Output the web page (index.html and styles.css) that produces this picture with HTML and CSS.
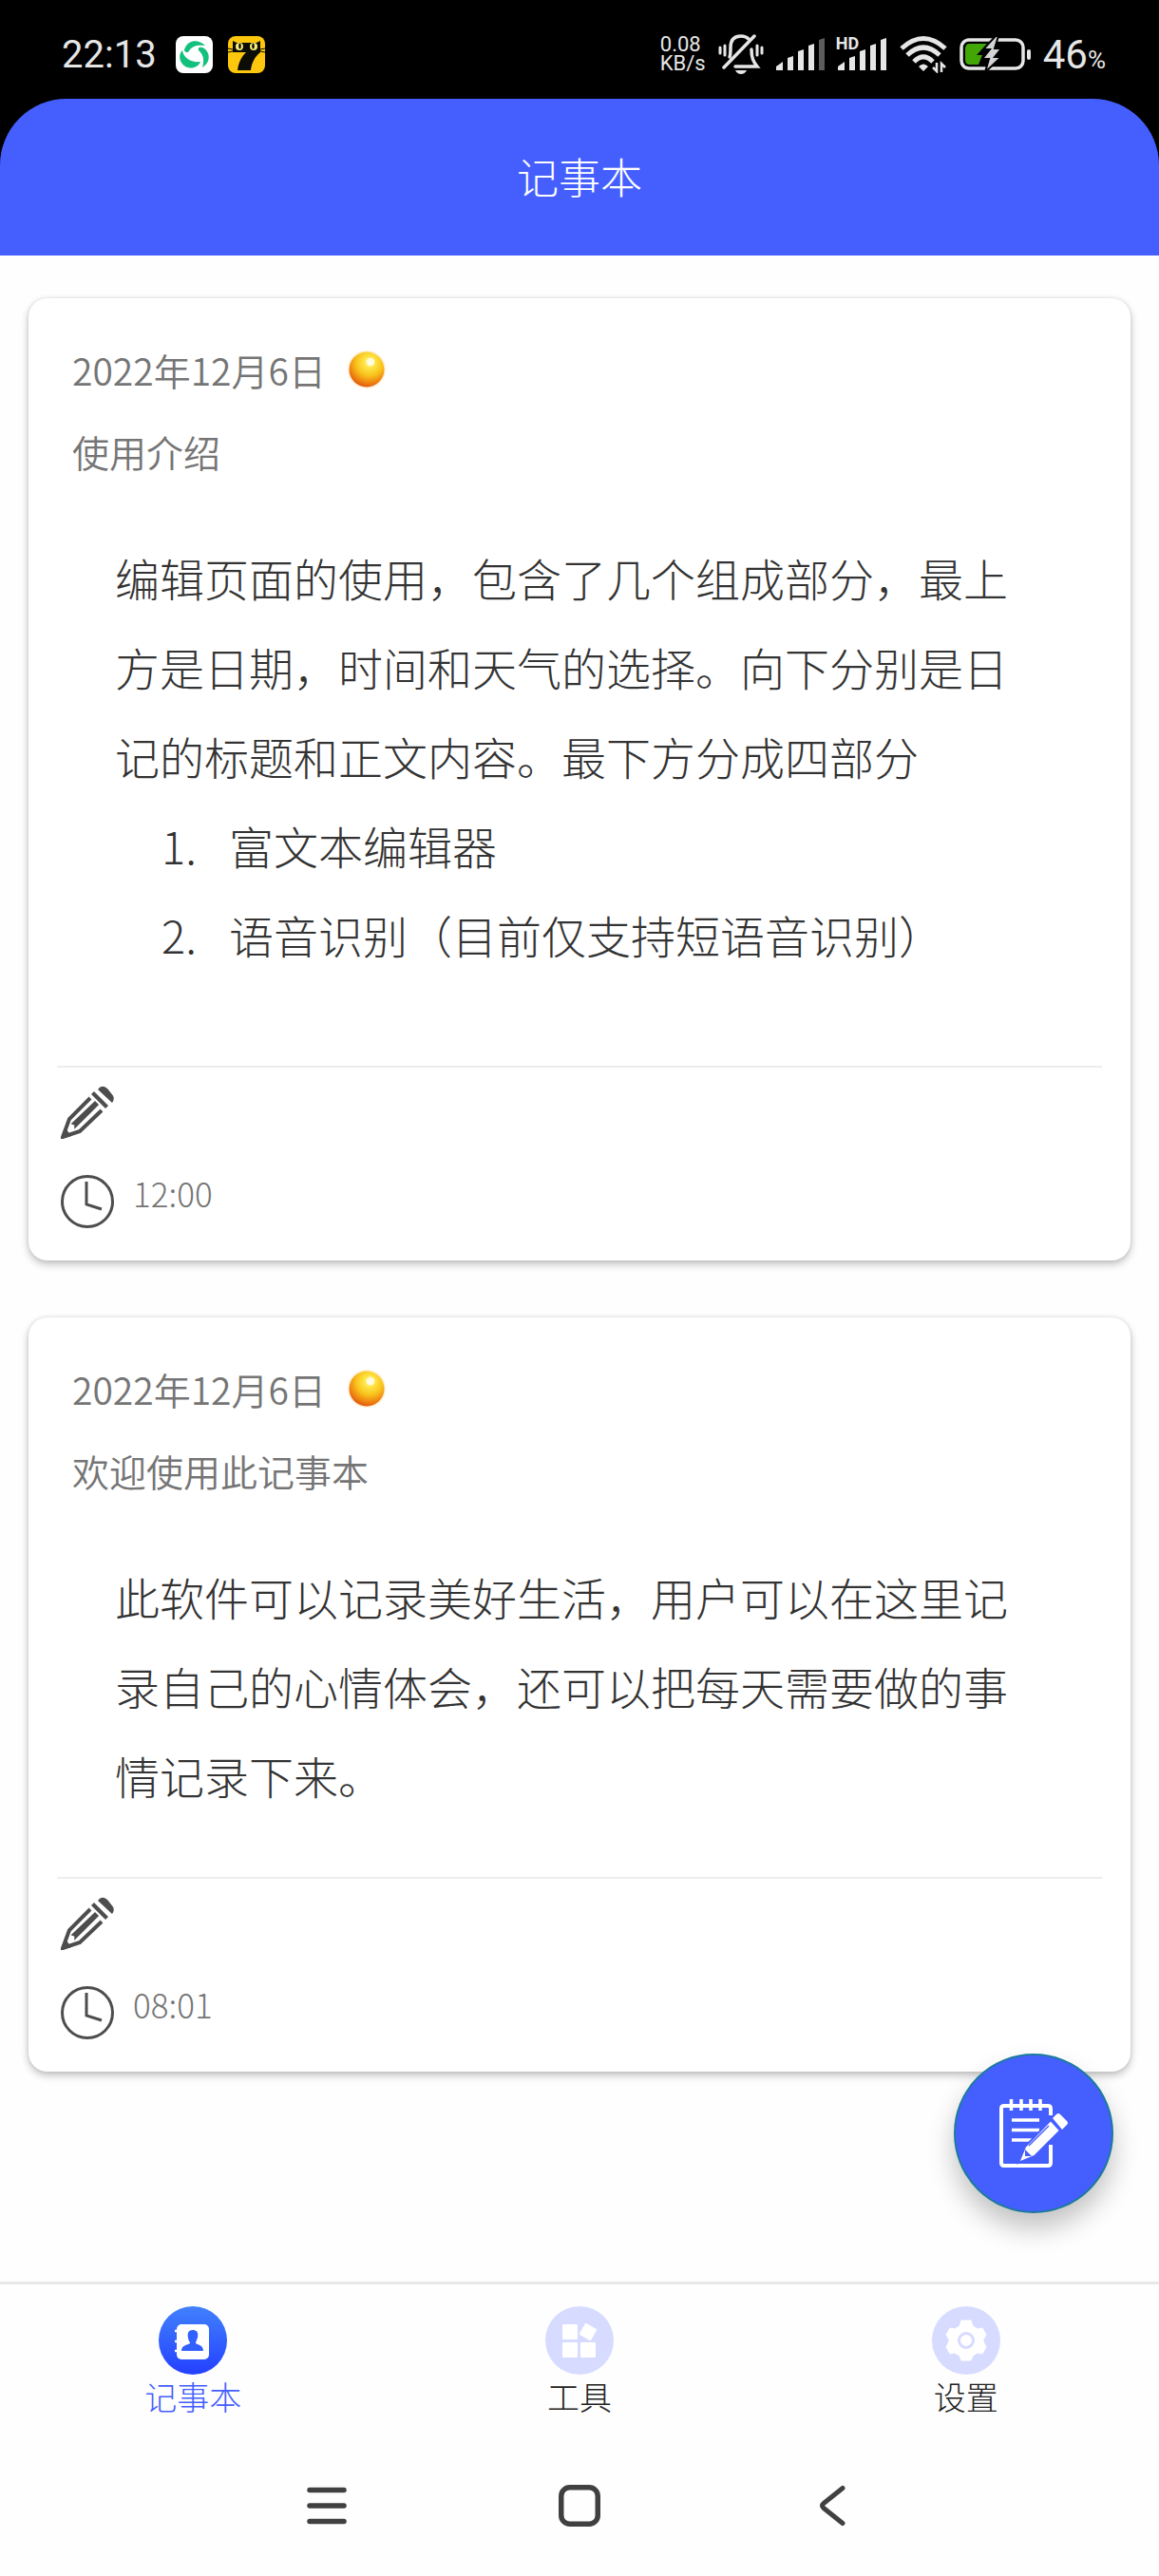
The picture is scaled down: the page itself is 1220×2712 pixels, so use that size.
FILE: index.html
```html
<!DOCTYPE html>
<html lang="zh-CN">
<head>
<meta charset="utf-8">
<meta name="viewport" content="width=device-width, initial-scale=1">
<title>记事本</title>
<link rel="stylesheet" href="styles.css">
</head>
<body>
<svg class="sprite" aria-hidden="true">
  <defs>
    <radialGradient id="orb-fill" cx="58%" cy="30%" r="75%">
      <stop offset="0" stop-color="#fffbd0"/>
      <stop offset=".18" stop-color="#ffe84a"/>
      <stop offset=".5" stop-color="#f8c41c"/>
      <stop offset=".8" stop-color="#ee7d10"/>
      <stop offset="1" stop-color="#d8480c"/>
    </radialGradient>
    <linearGradient id="tab-fill" x1="0" y1="0" x2="0" y2="1">
      <stop offset="0" stop-color="#4181fd"/>
      <stop offset="1" stop-color="#2440ff"/>
    </linearGradient>
    <symbol id="orb" viewBox="0 0 42 42">
      <circle cx="21" cy="21" r="20" fill="#ffd9a0" opacity=".45"/>
      <circle cx="21" cy="21" r="18.500" fill="url(#orb-fill)"/>
      <circle cx="25" cy="13" r="4.500" fill="#fff" opacity=".7"/>
    </symbol>
    <symbol id="pencil" viewBox="0 0 56 56">
      <g fill="#4d4d4d">
        <path d="M39 4 Q43-2 49 3 L53 8 Q58 13 54 18 Z"/>
        <path d="M35 6 L50 21 L47 24 L32 9 Z"/>
        <path d="M36 17 L39 20 L15 44 L15 41 L12 40 Z" stroke="#4d4d4d" stroke-width="1.500"/>
      </g>
      <path d="M31 13 L9 35 L2 54 L20 48 L43 26" fill="none" stroke="#4d4d4d" stroke-width="4"/>
      <path d="M6 46 L0 55 L1 56 L11 53 Z" fill="#4d4d4d"/>
    </symbol>
    <symbol id="clock" viewBox="0 0 56 56">
      <circle cx="28" cy="28" r="26.500" fill="none" stroke="#4d4d4d" stroke-width="3"/>
      <path d="M27 7 V31 L43 36" fill="none" stroke="#4d4d4d" stroke-width="3"/>
    </symbol>
  </defs>
</svg>

<div class="status">
  <div class="status-left">
    <time class="status-time">22:13</time>
    <svg class="app-icon" viewBox="0 0 39 39" aria-hidden="true">
      <rect width="39" height="39" rx="8" fill="#fff"/>
      <g fill="#14c07d">
        <path d="M10 12 C13 5 23 2 31 10 C23 9 17 10 13 17 C9 17 8 15 10 12 Z"/>
        <path d="M28 12 C37 16 37 28 28 33 C30 27 30 20 24 15 C23 12 25 11 28 12 Z"/>
        <path d="M7 15 C8 23 16 28 26 27 C23 35 11 36 6 28 C3 23 4 18 7 15 Z"/>
      </g>
    </svg>
    <svg class="app-icon" viewBox="0 0 39 39" aria-hidden="true">
      <rect width="39" height="39" rx="8" fill="#fdc70e"/>
      <path d="M5 5 L9 7 H30 L34 5 V17 C28 22 25 28 24 36 H10 C11 28 14 22 19 17 H5 Z" fill="#0c0c06"/>
      <g fill="#f7ee7c"><circle cx="12" cy="11" r="4"/><circle cx="27" cy="11" r="4"/></g>
      <g fill="#0c0c06"><ellipse cx="12.500" cy="10.500" rx="1.300" ry="3"/><ellipse cx="26.500" cy="10.500" rx="1.300" ry="3"/></g>
      <path d="M0 13 L5 14 M0 17 L5 16 M39 13 L34 14 M39 17 L34 16" stroke="#0c0c06" stroke-width="1"/>
    </svg>
  </div>
  <div class="status-right">
    <div class="speed"><span>0.08</span><span>KB/s</span></div>
    <svg class="bell" viewBox="0 0 48 42" aria-hidden="true">
      <g fill="none" stroke="#e6e6e6" stroke-width="3.500" stroke-linecap="round">
        <path d="M12 24 Q13 22 13 14 C13 5 18 2 24 2 C28 2 30 3 32 5"/>
        <path d="M35 16 C35 25 37 29 41 34 H18"/>
        <path d="M38 2 L6 35"/>
        <path d="M7 12 V22 M2 14 V20 M41 12 V22 M46 14 V20" stroke-width="3"/>
      </g>
      <path d="M18 38 H30 Q28 42 24 42 Q20 42 18 38 Z" fill="#e6e6e6"/>
    </svg>
    <svg class="signal" viewBox="0 0 52 34" aria-hidden="true">
      <g fill="#e6e6e6"><path d="M0 34 V30 L7 25 V34 Z"/><path d="M12 34 V21 L18 19 V34 Z"/><path d="M23 34 V14 L29 12 V34 Z"/><path d="M34 34 V8 L40 6 V34 Z"/></g>
      <path d="M45 34 V2 L51 0 V34 Z" fill="#5c5c5c"/>
    </svg>
    <div class="signal-hd">
      <svg class="signal" viewBox="0 0 52 34" aria-hidden="true">
        <g fill="#e6e6e6"><path d="M0 34 V30 L7 25 V34 Z"/><path d="M12 34 V21 L18 19 V34 Z"/><path d="M23 34 V14 L29 12 V34 Z"/><path d="M34 34 V8 L40 6 V34 Z"/><path d="M45 34 V2 L51 0 V34 Z"/></g>
      </svg>
      <span class="hd">HD</span>
    </div>
    <svg class="wifi" viewBox="0 0 50 40" aria-hidden="true">
      <g fill="none" stroke="#e6e6e6" stroke-width="5">
        <path d="M2 14 Q25-7 48 14"/><path d="M8 21 Q25 5 42 21"/><path d="M15 28 Q25 18 35 28"/>
      </g>
      <path d="M20 33 Q25 28 30 33 L25 38 Z" fill="#e6e6e6"/>
      <path d="M39 29 V38 L35 34 M44 39 V30 L48 34" fill="none" stroke="#e6e6e6" stroke-width="2.500"/>
    </svg>
    <svg class="battery" viewBox="0 0 75 36" aria-hidden="true">
      <rect x="2" y="3" width="65" height="30" rx="8" fill="none" stroke="#e6e6e6" stroke-width="3.500"/>
      <path d="M6 12 Q6 7 11 7 H29 L18 19 H24 L20 29 H11 Q6 29 6 24 Z" fill="#43a607"/>
      <rect x="71" y="13" width="4" height="11" rx="2" fill="#e6e6e6"/>
      <path d="M38-1 L25 13 H32 L24 23 H31 L27 37 L44 21 H37 L44 12 H37 L41-1 Z" fill="#d4d4d4" stroke="#000" stroke-width="2"/>
    </svg>
    <div class="percent">46<small>%</small></div>
  </div>
</div>

<div class="header-wrap">
  <header class="header"><h1>记事本</h1></header>
</div>

<main class="main">
  <article class="card">
    <div class="card-head">
      <div class="card-date"><time datetime="2022-12-06">2022年12月6日</time><svg class="orb" aria-hidden="true"><use href="#orb"/></svg></div>
      <h2>使用介绍</h2>
    </div>
    <div class="card-body">
      <p>编辑页面的使用，包含了几个组成部分，最上方是日期，时间和天气的选择。向下分别是日记的标题和正文内容。最下方分成四部分</p>
      <ol>
        <li><span class="num">1.</span><span>富文本编辑器</span></li>
        <li><span class="num">2.</span><span>语音识别（目前仅支持短语音识别）</span></li>
      </ol>
    </div>
    <footer class="card-foot">
      <button class="edit" type="button" aria-label="编辑"><svg class="icon" aria-hidden="true"><use href="#pencil"/></svg></button>
      <div class="card-time"><svg class="icon" aria-hidden="true"><use href="#clock"/></svg><time>12:00</time></div>
    </footer>
  </article>

  <article class="card">
    <div class="card-head">
      <div class="card-date"><time datetime="2022-12-06">2022年12月6日</time><svg class="orb" aria-hidden="true"><use href="#orb"/></svg></div>
      <h2>欢迎使用此记事本</h2>
    </div>
    <div class="card-body">
      <p>此软件可以记录美好生活，用户可以在这里记录自己的心情体会，还可以把每天需要做的事情记录下来。</p>
    </div>
    <footer class="card-foot">
      <button class="edit" type="button" aria-label="编辑"><svg class="icon" aria-hidden="true"><use href="#pencil"/></svg></button>
      <div class="card-time"><svg class="icon" aria-hidden="true"><use href="#clock"/></svg><time>08:01</time></div>
    </footer>
  </article>

  <button class="fab" type="button" aria-label="新建">
    <svg class="fab-icon" viewBox="0 0 72 72" aria-hidden="true">
      <g fill="none" stroke="#fff" stroke-width="4">
        <path d="M54 17 V10 Q54 7 51 7 H5 Q2 7 2 10 V67 Q2 70 5 70 H51 Q54 70 54 67 V48"/>
        <path d="M12.500 0 V12 M23 0 V12 M33 0 V12 M43 0 V12" stroke-width="3.500"/>
        <path d="M13 22 H42 M13 32.500 H42 M13 43 H34" stroke-width="3.500"/>
      </g>
      <path d="M27 50 L54 22 L64 33 L37 60 L20 67 Z" fill="#fff" stroke="#455fff" stroke-width="2"/>
      <path d="M27 53 L27 60 L34 60" fill="#455fff"/>
      <path d="M31 49 L52 28" stroke="#455fff" stroke-width="1.500"/>
      <path d="M56 20 L60 16 Q62 14 64 16 L71 23 Q73 25 71 27 L66 32 Z" fill="#fff"/>
    </svg>
  </button>
</main>

<nav class="tabs">
  <a class="tab active" href="#notes">
    <svg class="tab-icon" viewBox="0 0 72 72" aria-hidden="true">
      <circle cx="36" cy="36" r="36" fill="url(#tab-fill)"/>
      <rect x="19" y="19" width="34" height="37" rx="5" fill="#fff"/>
      <path d="M17 26 H21 M17 37 H21 M17 47 H21" stroke="#fff" stroke-width="2.500"/>
      <path d="M36 25 C41 25 42 29 41 33 C40 36 39 37 39 39 C42 41 47 41 47 47 H24 C24 41 30 41 33 39 C33 37 31 36 31 33 C30 29 31 25 36 25 Z" fill="#3160fe"/>
    </svg>
    <span>记事本</span>
  </a>
  <a class="tab" href="#tools">
    <svg class="tab-icon" viewBox="0 0 72 72" aria-hidden="true">
      <circle cx="36" cy="36" r="36" fill="#d7dbff"/>
      <g fill="#fff">
        <rect x="18" y="19" width="16" height="16" rx="1"/><rect x="18" y="38" width="16" height="16" rx="1"/><rect x="37" y="38" width="16" height="16" rx="1"/>
        <rect x="38" y="20" width="14" height="14" rx="1" transform="rotate(30 45 27)"/>
      </g>
    </svg>
    <span>工具</span>
  </a>
  <a class="tab" href="#settings">
    <svg class="tab-icon" viewBox="0 0 72 72" aria-hidden="true">
      <circle cx="36" cy="36" r="36" fill="#d7dbff"/>
      <path d="M31 15 H41 L43 21 L48 24 L53 23 L57 30 L54 35 V37 L57 43 L53 50 L48 49 L43 52 L41 57 H31 L29 52 L24 49 L19 50 L15 43 L18 37 V35 L15 30 L19 23 L24 24 L29 21 Z" fill="#fff" stroke="#fff" stroke-width="1" stroke-linejoin="round"/>
      <circle cx="36" cy="36" r="7.500" fill="#fff" stroke="#d7dbff" stroke-width="3"/>
    </svg>
    <span>设置</span>
  </a>
</nav>

<nav class="sysnav">
  <button type="button" aria-label="最近任务"><svg viewBox="0 0 44 44"><path d="M4 5.500 H40 M4 22 H40 M4 38.500 H40" stroke="#404040" stroke-width="5.500" stroke-linecap="round"/></svg></button>
  <button type="button" aria-label="主页"><svg viewBox="0 0 44 44"><rect x="2.750" y="2.750" width="38.500" height="38.500" rx="9" fill="none" stroke="#404040" stroke-width="5.500"/></svg></button>
  <button type="button" aria-label="返回"><svg viewBox="0 0 44 44"><path d="M33 3.500 L13 19.500 Q10 22 13 24.500 L33 40.500" fill="none" stroke="#404040" stroke-width="5" stroke-linecap="round"/></svg></button>
</nav>
</body>
</html>
```
FILE: styles.css
```css
* { box-sizing: border-box; }

body {
  margin: 0;
  min-height: 100vh;
  display: flex;
  flex-direction: column;
  background: #fefefe;
  color: #333;
  font-family: "Noto Sans CJK SC", sans-serif;
  font-weight: 300;
}

h1, h2, p, ol { margin: 0; padding: 0; font-weight: inherit; }
button { padding: 0; border: 0; background: none; cursor: pointer; }
svg { display: block; flex: none; }
.sprite { position: absolute; width: 0; height: 0; }

/* status bar */
.status {
  height: 104px;
  padding: 10px 56px 0 65px;
  display: flex;
  align-items: center;
  justify-content: space-between;
  background: #000;
  color: #e6e6e6;
  font-family: Roboto, sans-serif;
  font-weight: 400;
}
.status-left, .status-right { display: flex; align-items: center; }
.status-left { gap: 16px; }
.status-time { margin-right: 4px; font-size: 40px; }
.app-icon { width: 39px; height: 39px; }
.status-right { gap: 13px; }
.speed { display: flex; flex-direction: column; font-size: 22px; line-height: 20px; }
.bell { width: 48px; height: 42px; }
.signal { width: 52px; height: 34px; }
.signal-hd { position: relative; }
.hd {
  position: absolute;
  left: -2px;
  top: -3px;
  font-size: 18px;
  line-height: 18px;
  font-weight: 700;
}
.wifi { width: 50px; height: 40px; }
.battery { width: 75px; height: 36px; }
.percent { font-size: 42px; }
.percent small { font-size: 26px; }

/* title bar */
.header-wrap { background: #000; }
.header {
  height: 165px;
  padding-bottom: 4px;
  display: flex;
  align-items: center;
  justify-content: center;
  background: #455fff;
  border-radius: 70px 70px 0 0;
  color: #fff;
}
.header h1 { font-size: 44px; line-height: 64px; }

/* notes */
.main {
  position: relative;
  flex: 1;
  padding: 45px 30px;
  display: flex;
  flex-direction: column;
  gap: 60px;
}
.card {
  background: #fff;
  border-radius: 20px;
  box-shadow: 0 4px 8px rgba(0, 0, 0, .24), 0 0 4px rgba(0, 0, 0, .1);
}
.card-head { padding: 46px 46px 0; color: #757575; font-size: 39px; font-weight: 350; line-height: 58px; }
.card-date { display: flex; align-items: center; gap: 22px; }
.card-head h2 { margin-top: 28px; font-size: 39px; line-height: 58px; }
.orb { width: 42px; height: 42px; }
.card-body { padding: 57px 91px 0; font-size: 47px; line-height: 94px; }
.card-body ol { padding-bottom: 31px; list-style: none; }
.card-body li { display: flex; padding-left: 49px; }
.num { flex: 0 0 71px; }
.card-foot {
  margin: 60px 30px 0;
  padding: 19px 4px 34px;
  border-top: 2px solid #ededed;
}
.edit { display: block; }
.icon { width: 56px; height: 56px; }
.card-time {
  margin-top: 38px;
  display: flex;
  gap: 20px;
  color: #757575;
  font-size: 35px;
  line-height: 38px;
}

/* new note */
.fab {
  position: absolute;
  right: 48px;
  bottom: 72px;
  width: 168px;
  height: 168px;
  display: flex;
  align-items: center;
  justify-content: center;
  border: 2px solid #1c7a9c;
  border-radius: 50%;
  background: #455fff;
  box-shadow: 0 16px 28px rgba(0, 0, 0, .24);
}
.fab-icon { width: 72px; height: 72px; }

/* tabs */
.tabs {
  display: flex;
  padding: 23px 0 18px;
  border-top: 3px solid #e8e8e8;
}
.tab {
  flex: 1;
  display: flex;
  flex-direction: column;
  align-items: center;
  color: #222;
  font-size: 34px;
  line-height: 46px;
  text-decoration: none;
}
.tab.active { color: #455fff; }
.tab-icon { width: 72px; height: 72px; }

/* system navigation */
.sysnav {
  height: 148px;
  display: flex;
  align-items: center;
  justify-content: center;
  gap: 222px;
}
.sysnav svg { width: 44px; height: 44px; }
```
